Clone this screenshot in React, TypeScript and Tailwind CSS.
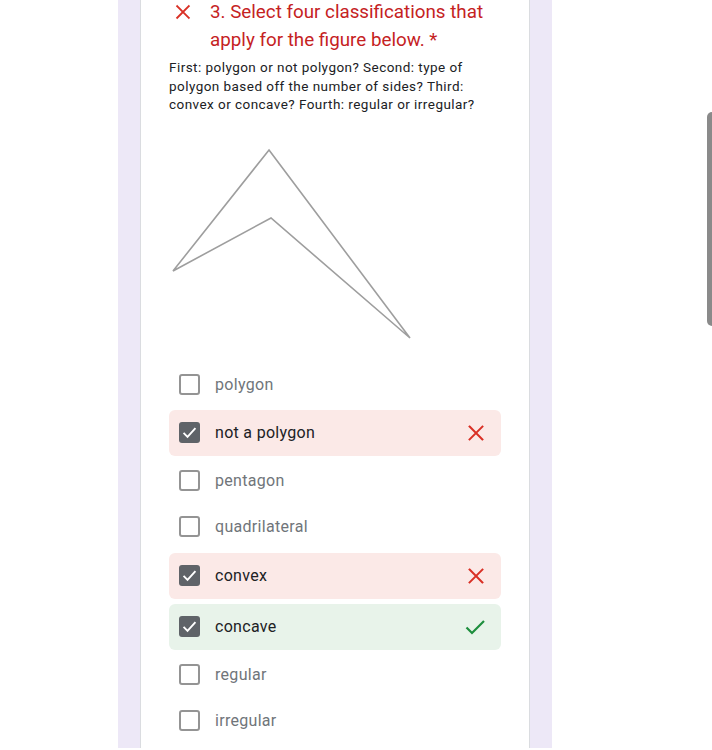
import React from 'react';

type Option = { label: string; checked?: boolean; result?: 'wrong' | 'right' };

const options: Option[] = [
  { label: 'polygon' },
  { label: 'not a polygon', checked: true, result: 'wrong' },
  { label: 'pentagon' },
  { label: 'quadrilateral' },
  { label: 'convex', checked: true, result: 'wrong' },
  { label: 'concave', checked: true, result: 'right' },
  { label: 'regular' },
  { label: 'irregular' },
];

const CrossIcon = ({ className }: { className?: string }) => (
  <svg viewBox="0 0 24 24" className={className} fill="none" stroke="currentColor" strokeWidth="2.2" strokeLinecap="square">
    <path d="M5 5 L19 19 M19 5 L5 19" />
  </svg>
);

const CheckIcon = ({ className }: { className?: string }) => (
  <svg viewBox="0 0 24 24" className={className} fill="none" stroke="currentColor" strokeWidth="2.2">
    <path d="M3.5 12.5 L9 18 L21 6" />
  </svg>
);

const Box = ({ checked }: { checked?: boolean }) =>
  checked ? (
    <div className="w-[21px] h-[21px] rounded-[3px] bg-[#5f6368] flex items-center justify-center">
      <svg viewBox="0 0 24 24" className="w-[19px] h-[19px]" fill="none" stroke="white" strokeWidth="2.4">
        <path d="M4.5 12.5 L9.5 17.5 L19.5 6.5" />
      </svg>
    </div>
  ) : (
    <div className="w-[21px] h-[21px] rounded-[3px] border-2 border-[#949494]" />
  );

const OptionRow = ({ opt }: { opt: Option }) => {
  const bg =
    opt.result === 'wrong' ? 'bg-[#fbe9e7]' : opt.result === 'right' ? 'bg-[#e8f3ea]' : '';
  return (
    <div className={`h-[46px] flex items-center rounded-md pl-[10px] pr-[14px] ${bg}`}>
      <Box checked={opt.checked} />
      <span className={`ml-[15px] text-[16px] tracking-[0.3px] flex-1 ${opt.checked ? 'text-[#202124]' : 'text-[#70757a]'}`}>
        {opt.label}
      </span>
      {opt.result === 'wrong' && <CrossIcon className="w-[22px] h-[22px] text-[#d93025]" />}
      {opt.result === 'right' && <CheckIcon className="w-[24px] h-[24px] text-[#1e8e3e]" />}
    </div>
  );
};

export default function App() {
  return (
    <div className="relative min-h-screen h-[750px] overflow-hidden bg-white font-['Roboto',sans-serif]">
      <div className="ml-[118px] w-[434px] h-full bg-[#ede8f7] pl-[22px]">
        <div className="w-[390px] h-full bg-white border-x border-[#dadce0] px-7">
          {/* question title */}
          <div className="flex -mt-[2px] text-[#c5221f] text-[18.8px] leading-[28px]">
            <div className="w-[41px] shrink-0 pl-[4px] pt-[4px]">
              <CrossIcon className="w-[20px] h-[20px] text-[#d93025]" />
            </div>
            <div>
              3. Select four classifications that apply for the figure below. *
            </div>
          </div>

          <p className="mt-1 text-[13.5px] tracking-[0.45px] leading-[18.5px] text-[#202124]">
            First: polygon or not polygon? Second: type of polygon based off the number of sides? Third: convex or concave? Fourth: regular or irregular?
          </p>

          <svg width="333" height="247" className="block">
            <polygon
              points="100,36 241,224 102,104 4,157"
              fill="none"
              stroke="#9e9e9e"
              strokeWidth="1.6"
              strokeLinejoin="miter"
            />
          </svg>

          <div className="flex flex-col">
            <div className="mt-[1px]"><OptionRow opt={options[0]} /></div>
            <div className="mt-[2px]"><OptionRow opt={options[1]} /></div>
            <div className="mt-[2px]"><OptionRow opt={options[2]} /></div>
            <OptionRow opt={options[3]} />
            <div className="mt-[3px]"><OptionRow opt={options[4]} /></div>
            <div className="mt-[5px]"><OptionRow opt={options[5]} /></div>
            <div className="mt-[2px]"><OptionRow opt={options[6]} /></div>
            <OptionRow opt={options[7]} />
          </div>
        </div>
      </div>

      {/* scrollbar thumb */}
      <div className="absolute right-0 top-[112px] w-[5px] h-[214px] rounded-l-full bg-[#8a8a8a]" />
    </div>
  );
}
